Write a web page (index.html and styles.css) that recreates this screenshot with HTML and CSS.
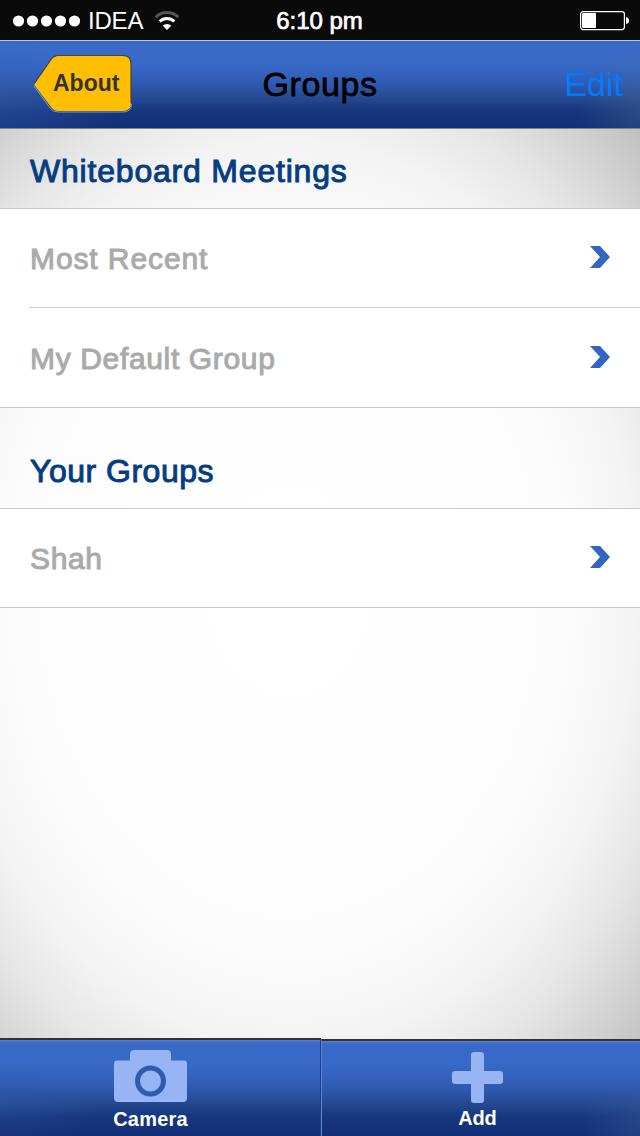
FILE: index.html
```html
<!DOCTYPE html>
<html lang="en">
<head>
    <meta charset="UTF-8">
    <meta name="viewport" content="width=device-width, initial-scale=1.0">
    <title>Groups</title>
    <link rel="stylesheet" href="styles.css">
</head>
<body>

<!-- Status bar -->
<div class="status-bar">
    <div class="carrier">
        <svg class="signal" width="68" height="12" viewBox="0 0 68 12" fill="#fff">
            <circle cx="5.5" cy="6" r="5.6"/>
            <circle cx="19.5" cy="6" r="5.6"/>
            <circle cx="33.5" cy="6" r="5.6"/>
            <circle cx="47.5" cy="6" r="5.6"/>
            <circle cx="61.5" cy="6" r="5.6"/>
        </svg>
        <span>IDEA</span>
        <svg class="wifi" width="26" height="20" viewBox="0 0 26 20" fill="none">
            <path d="M1.7 6.2A16 16 0 0 1 24.3 6.2" stroke="#555" stroke-width="3"/>
            <path d="M5.6 10.4A10.8 10.8 0 0 1 20.4 10.4" stroke="#fff" stroke-width="3"/>
            <path d="M8.6 14.6A6.5 6.5 0 0 1 17.4 14.6L13 19Z" fill="#fff"/>
        </svg>
    </div>
    <span class="time">6:10 pm</span>
    <svg class="battery" width="50" height="20" viewBox="0 0 50 20">
        <rect x="0.6" y="0.6" width="43.8" height="18" rx="2.5" fill="none" stroke="#fff" stroke-width="1.2"/>
        <rect x="2" y="2" width="14" height="15" rx="1" fill="#fff"/>
        <path d="M46 6Q49 6.5 49 9.6T46 13Z" fill="#fff"/>
    </svg>
</div>

<!-- Navigation bar -->
<header class="nav-bar">
    <a class="back-button">
        <svg class="back-shape" width="100" height="60" viewBox="0 0 100 60">
            <path d="M1 32L17 54Q20 58 25 58H90Q98.500 58 98.500 50" fill="none" stroke="#7f99c4" stroke-width="1"/>
            <path d="M1 30.500L18 6Q21 2 25 2H90Q98 2 98 10V49Q98 57 90 57H25Q21 57 18 53Z" fill="#ffbf00"/>
            <path d="M1 30L18 5.500Q21 1.500 25 1.500H90Q98 1.500 98 10V49" fill="none" stroke="#4a4432" stroke-width="1.200"/>
        </svg>
        <span>About</span>
    </a>
    <h1>Groups</h1>
    <a class="edit-link">Edit</a>
</header>

<!-- Group lists -->
<main class="content">
    <h2 class="first">Whiteboard Meetings</h2>
    <ul class="list">
        <li>
            <span class="wide">Most Recent</span>
            <svg class="arrow" width="20" height="22" viewBox="0 0 20 22"><path d="M0 0H10L20 11L10 22H0L10 11Z"/></svg>
        </li>
        <li>
            <span>My Default Group</span>
            <svg class="arrow" width="20" height="22" viewBox="0 0 20 22"><path d="M0 0H10L20 11L10 22H0L10 11Z"/></svg>
        </li>
    </ul>
    <h2>Your Groups</h2>
    <ul class="list">
        <li>
            <span>Shah</span>
            <svg class="arrow" width="20" height="22" viewBox="0 0 20 22"><path d="M0 0H10L20 11L10 22H0L10 11Z"/></svg>
        </li>
    </ul>
</main>

<!-- Bottom tabs -->
<footer class="tab-bar">
    <a class="tab tab-camera">
        <svg width="73" height="52" viewBox="0 0 73 52">
            <path d="M3 10.500H16V4Q16 0 20 0H53Q57 0 57 4V10.500H70Q73 10.500 73 13.500V48Q73 52 69 52H4Q0 52 0 48V13.500Q0 10.500 3 10.500Z" fill="#97b5f4"/>
            <circle cx="36.500" cy="31" r="13" fill="#97b5f4" stroke="#2f5cb2" stroke-width="5"/>
        </svg>
        <span>Camera</span>
    </a>
    <a class="tab tab-add">
        <svg width="51" height="51" viewBox="0 0 51 51">
            <path d="M22 0H29Q32 0 32 3V19H48Q51 19 51 22V29Q51 32 48 32H32V48Q32 51 29 51H22Q19 51 19 48V32H3Q0 32 0 29V22Q0 19 3 19H19V3Q19 0 22 0Z" fill="#97b5f4"/>
        </svg>
        <span>Add</span>
    </a>
</footer>

</body>
</html>
```

FILE: styles.css
```css
* {
    box-sizing: border-box;
}
body {
    display: flex;
    flex-direction: column;
    width: 640px;
    height: 1136px;
    margin: 0;
    overflow: hidden;
    font-family: "Liberation Sans", Arial, sans-serif;
    background-color: #fff;
}
h1, h2, ul {
    margin: 0;
    padding: 0;
    font-weight: normal;
    list-style: none;
}

/* Status bar */
.status-bar {
    display: grid;
    grid-template-columns: 1fr auto 1fr;
    align-items: center;
    height: 40px;
    padding: 1px 10px 0 13px;
    font-size: 24px;
    line-height: 40px;
    color: #fff;
    background-color: #0a0a0a;
}
.carrier {
    display: flex;
    align-items: center;
}
.carrier span {
    margin: 0 11px 0 7px;
    letter-spacing: -0.2px;
}
.wifi {
    margin-top: -1px;
}
.time {
    margin-left: -4px;
    -webkit-text-stroke: 0.7px #fff;
}
.battery {
    justify-self: end;
}

/* Navigation bar */
.nav-bar {
    display: grid;
    grid-template-columns: 1fr auto 1fr;
    align-items: center;
    height: 89px;
    padding: 0 17px 2px;
    border-top: 1px solid #b9c6df;
    border-bottom: 1px solid #85817c;
    background: radial-gradient(ellipse 60px 70px at 100% 80%, rgba(80, 110, 145, 0.35), transparent),
        radial-gradient(ellipse 120px 60px at 0 70%, rgba(50, 90, 170, 0.5), transparent),
        linear-gradient(#3b6ac8, #3869c7 28%, #305bb3 48%, #264a91 65%, #16367e 80%, #123078);
}
.back-button {
    display: grid;
    align-items: center;
    width: 100px;
    margin-left: 16px;
}
.back-button > * {
    grid-area: 1 / 1;
}
.back-button span {
    padding: 0 0 1px 20px;
    font-size: 23px;
    font-weight: bold;
    color: #333;
}
.nav-bar h1 {
    padding-top: 1px;
    font-size: 34px;
    letter-spacing: 0.6px;
    color: #000;
    -webkit-text-stroke: 0.8px #000;
}
.edit-link {
    justify-self: end;
    padding-top: 1px;
    font-size: 34px;
    color: #007aff;
}

/* Lists */
.content {
    flex: 1;
    background: radial-gradient(ellipse 400px 520px at 290px 464px,
        #fff 0, #fefefe 40%, #fcfcfc 70%, #f3f3f3 87%, #e6e6e6 100%, #d3d3d3 113%, #c5c5c5 122%, #b9b9b9 130%);
}
.content h2 {
    height: 100px;
    padding: 44px 30px 0;
    font-size: 32px;
    line-height: 38px;
    letter-spacing: 0.5px;
    color: #053d83;
    -webkit-text-stroke: 1px #053d83;
}
.content h2.first {
    height: 79px;
    padding-top: 23px;
    letter-spacing: 0.8px;
}
.list {
    border-top: 1px solid #c8c7cc;
    border-bottom: 1px solid #c8c7cc;
    background-color: #fff;
}
.list li {
    display: flex;
    align-items: center;
    justify-content: space-between;
    height: 98px;
    margin-left: 30px;
    padding-right: 30px;
    font-size: 30px;
    letter-spacing: 0.65px;
    color: #aaa;
    -webkit-text-stroke: 1px #aaa;
}
.list li + li {
    height: 100px;
    border-top: 1px solid #c8c7cc;
}
.list span {
    padding-top: 2px;
}
.list .wide {
    letter-spacing: 0.9px;
}
.arrow {
    margin-bottom: 2px;
    fill: #3465c5;
}

/* Bottom tabs */
.tab-bar {
    display: flex;
    align-items: flex-end;
    height: 98px;
    margin-top: -98px;
}
.tab {
    display: flex;
    flex-direction: column;
    align-items: center;
    height: 98px;
    border-top: 2px solid #303236;
    font-size: 20px;
    font-weight: bold;
    line-height: 24px;
    color: #fff;
    background: radial-gradient(ellipse 100px 40px at 0 65%, rgba(50, 90, 170, 0.4), transparent),
        linear-gradient(#5681d4 0, #3a69c8 3%, #3869c7 25%, #305bb3 48%, #264a91 65%, #16367e 80%, #123078);
}
.tab-camera {
    width: 321px;
    padding: 10px 19px 0 0;
    border-right: 1px solid #1e3d80;
}
.tab-camera span {
    margin-top: 5px;
    letter-spacing: 0.2px;
}
.tab-add {
    width: 319px;
    height: 97px;
    padding: 11px 7px 0 0;
    border-left: 1px solid #5b88dc;
    background: radial-gradient(ellipse 60px 50px at 100% 85%, rgba(70, 100, 160, 0.35), transparent),
        linear-gradient(#5681d4 0, #3a69c8 3%, #3869c7 25%, #305bb3 48%, #264a91 65%, #16367e 80%, #123078);
}
.tab-add span {
    margin-top: 3px;
    letter-spacing: -0.2px;
}
```
